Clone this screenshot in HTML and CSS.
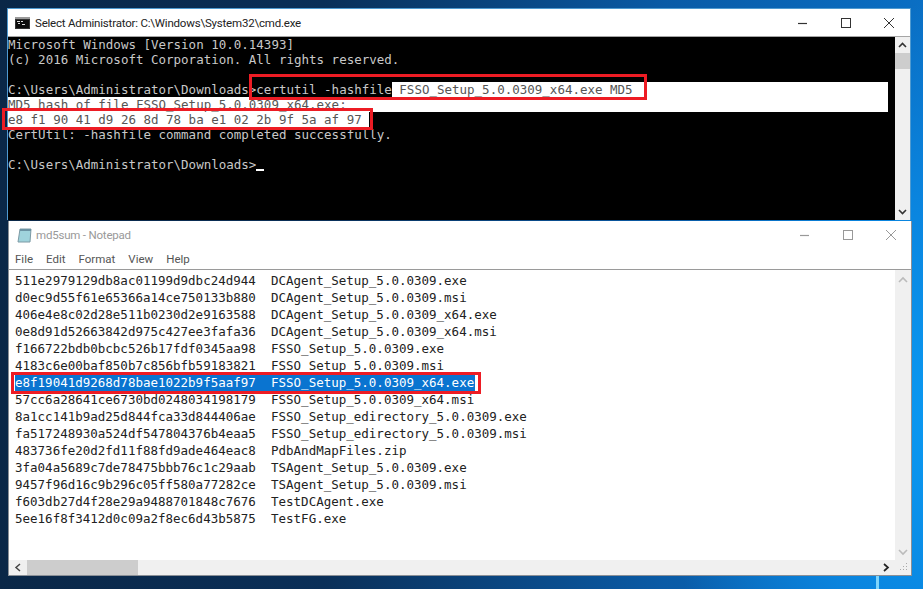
FILE: index.html
```html
<!DOCTYPE html>
<html lang="en">
<head>
<meta charset="utf-8">
<title>md5sum</title>
<link rel="stylesheet" href="styles.css">
</head>
<body>
<div class="desktop">
  <span class="streak"></span>
  <section class="window cmd">
    <header class="titlebar cmd-title">
      <svg class="app-icon" width="15" height="12" viewBox="0 0 15 12"><rect width="15" height="12" fill="#333"/><rect x="0" y="0" width="15" height="2" fill="#9a9a9a"/><rect x="1" y="3" width="13" height="8" fill="#0c0c0c"/><path d="M2 4h3v1H2zM6 4h2v1H6zM3 6h2v1H3zM7 7h3v1H7z" fill="#ddd"/></svg>
      <span class="title">Select Administrator: C:\Windows\System32\cmd.exe</span>
      <div class="controls">
        <svg width="12" height="12" viewBox="0 0 12 12"><path d="M1 6.500h9" stroke="#333" stroke-width="1.2" fill="none"/></svg>
        <svg width="12" height="12" viewBox="0 0 12 12"><rect x="1.500" y="1.500" width="9" height="9" stroke="#333" fill="none"/></svg>
        <svg width="12" height="12" viewBox="0 0 12 12"><path d="M1 1l10 10M11 1L1 11" stroke="#333" fill="none"/></svg>
      </div>
    </header>
    <div class="cmd-body">
      <div class="console">
        <div class="line">Microsoft Windows [Version 10.0.14393]</div>
        <div class="line">(c) 2016 Microsoft Corporation. All rights reserved.</div>
        <div class="line"></div>
        <div class="line sel-row"><span>C:\Users\Administrator\Downloads&gt;certutil -hashfile</span><span class="sel sel-fill"> FSSO_Setup_5.0.0309_x64.exe MD5</span></div>
        <div class="line sel sel-full">MD5 hash of file FSSO_Setup_5.0.0309_x64.exe:</div>
        <div class="line sel sel-hash">e8 f1 90 41 d9 26 8d 78 ba e1 02 2b 9f 5a af 97</div>
        <div class="line">CertUtil: -hashfile command completed successfully.</div>
        <div class="line"></div>
        <div class="line">C:\Users\Administrator\Downloads&gt;<span class="cursor"></span></div>
      </div>
      <div class="vscroll cmd-scroll">
        <svg class="arrow" width="15" height="16" viewBox="0 0 15 16"><path d="M4 10l3.500-3.500L11 10" stroke="#333" stroke-width="1.6" fill="none"/></svg>
        <div class="thumb cmd-thumb"></div>
        <div class="spacer"></div>
        <svg class="arrow" width="15" height="16" viewBox="0 0 15 16"><path d="M4 6l3.500 3.500L11 6" stroke="#333" stroke-width="1.6" fill="none"/></svg>
      </div>
    </div>
  </section>

  <section class="window notepad">
    <header class="titlebar np-title">
      <svg class="app-icon" width="16" height="16" viewBox="0 0 16 16"><path d="M3 2h11l-1 13H1z" fill="#9fd3dc" stroke="#7d9aa5"/><path d="M3 2h11v2H3z" fill="#6b93a3"/></svg>
      <span class="title inactive">md5sum - Notepad</span>
      <div class="controls np-controls">
        <svg width="12" height="12" viewBox="0 0 12 12"><path d="M1 6.500h9" stroke="#999" stroke-width="1.2" fill="none"/></svg>
        <svg width="12" height="12" viewBox="0 0 12 12"><rect x="1.500" y="1.500" width="9" height="9" stroke="#999" fill="none"/></svg>
        <svg width="12" height="12" viewBox="0 0 12 12"><path d="M1 1l10 10M11 1L1 11" stroke="#999" fill="none"/></svg>
      </div>
    </header>
    <nav class="menu">
      <span>File</span><span>Edit</span><span>Format</span><span>View</span><span>Help</span>
    </nav>
    <div class="np-main">
      <div class="np-text">
        <div class="row"><span class="hash">511e2979129db8ac01199d9dbc24d944</span><span>DCAgent_Setup_5.0.0309.exe</span></div>
        <div class="row"><span class="hash">d0ec9d55f61e65366a14ce750133b880</span><span>DCAgent_Setup_5.0.0309.msi</span></div>
        <div class="row"><span class="hash">406e4e8c02d28e511b0230d2e9163588</span><span>DCAgent_Setup_5.0.0309_x64.exe</span></div>
        <div class="row"><span class="hash">0e8d91d52663842d975c427ee3fafa36</span><span>DCAgent_Setup_5.0.0309_x64.msi</span></div>
        <div class="row"><span class="hash">f166722bdb0bcbc526b17fdf0345aa98</span><span>FSSO_Setup_5.0.0309.exe</span></div>
        <div class="row"><span class="hash">4183c6e00baf850b7c856bfb59183821</span><span>FSSO_Setup_5.0.0309.msi</span></div>
        <div class="row selected"><span class="hash">e8f19041d9268d78bae1022b9f5aaf97</span><span>FSSO_Setup_5.0.0309_x64.exe</span></div>
        <div class="row"><span class="hash">57cc6a28641ce6730bd0248034198179</span><span>FSSO_Setup_5.0.0309_x64.msi</span></div>
        <div class="row"><span class="hash">8a1cc141b9ad25d844fca33d844406ae</span><span>FSSO_Setup_edirectory_5.0.0309.exe</span></div>
        <div class="row"><span class="hash">fa517248930a524df547804376b4eaa5</span><span>FSSO_Setup_edirectory_5.0.0309.msi</span></div>
        <div class="row"><span class="hash">483736fe20d2fd11f88fd9ade464eac8</span><span>PdbAndMapFiles.zip</span></div>
        <div class="row"><span class="hash">3fa04a5689c7de78475bbb76c1c29aab</span><span>TSAgent_Setup_5.0.0309.exe</span></div>
        <div class="row"><span class="hash">9457f96d16c9b296c05ff580a77282ce</span><span>TSAgent_Setup_5.0.0309.msi</span></div>
        <div class="row"><span class="hash">f603db27d4f28e29a9488701848c7676</span><span>TestDCAgent.exe</span></div>
        <div class="row"><span class="hash">5ee16f8f3412d0c09a2f8ec6d43b5875</span><span>TestFG.exe</span></div>
      </div>
      <div class="vscroll np-vscroll">
        <svg class="arrow" width="16" height="18" viewBox="0 0 16 18"><path d="M4 12l4-4 4 4" stroke="#bbb" stroke-width="1.6" fill="none"/></svg>
        <div class="spacer"></div>
        <svg class="arrow" width="16" height="18" viewBox="0 0 16 18"><path d="M4 8l4 4 4-4" stroke="#bbb" stroke-width="1.6" fill="none"/></svg>
      </div>
    </div>
    <div class="hscroll">
      <svg class="arrow" width="18" height="15" viewBox="0 0 18 15"><path d="M11 4L7 7.500l4 3.500" stroke="#444" stroke-width="1.5" fill="none"/></svg>
      <div class="hthumb"></div>
      <div class="spacer"></div>
      <svg class="arrow" width="18" height="15" viewBox="0 0 18 15"><path d="M7 4l4 3.500-4 3.500" stroke="#222" stroke-width="1.7" fill="none"/></svg>
      <svg class="grip" width="16" height="15" viewBox="0 0 16 15"><path d="M11 3h1v1h-1zM8 6h1v1H8zM11 6h1v1h-1zM5 9h1v1H5zM8 9h1v1H8zM11 9h1v1h-1z" fill="#aaa"/></svg>
    </div>
  </section>

  <div class="callout callout-cmd"></div>
  <div class="callout callout-hash"></div>
  <div class="callout callout-row"></div>
</div>
</body>
</html>
```

FILE: styles.css
```css
* { box-sizing: border-box; }
html, body { margin: 0; padding: 0; }
body { overflow: hidden; }

.desktop {
  position: relative;
  width: 923px;
  height: 589px;
  overflow: hidden;
  background:
    radial-gradient(ellipse 300px 420px at 960px 420px, #0a9cf5 0%, #0a84de 55%, rgba(10,100,180,0) 100%),
    linear-gradient(90deg, #0a2747 0%, #0a2f58 35%, #0a5ba6 72%, #0a6fc4 100%);
}

.streak {
  position: absolute;
  left: 876px;
  top: 570px;
  width: 3px;
  height: 19px;
  background: #7fd4fb;
}

.window {
  position: absolute;
  display: flex;
  flex-direction: column;
  background: #fff;
}

.cmd {
  left: 7px;
  top: 8px;
  width: 904px;
  height: 212px;
  border: 1px solid #4f9ad0;
  border-bottom: 0;
}

.notepad {
  left: 8px;
  top: 221px;
  width: 904px;
  height: 355px;
  border: 1px solid #8a8f96;
  border-top: 0;
}

.titlebar {
  display: flex;
  align-items: center;
  flex: none;
}

.cmd-title {
  height: 28px;
  padding-left: 7px;
  border-bottom: 1px solid #a5a5a5;
}

.np-title {
  height: 27px;
  padding-left: 8px;
}

.app-icon { flex: none; }

.title {
  margin-left: 5px;
  font: 11.5px/16px Roboto, sans-serif;
  letter-spacing: -0.2px;
  color: #222;
  white-space: nowrap;
}

.title.inactive { color: #999; margin-left: 3px; }

.controls {
  margin-left: auto;
  display: flex;
  gap: 31px;
  padding-right: 15px;
}

.np-controls { padding-right: 14px; }

.cmd-body {
  flex: 1;
  display: flex;
  min-height: 0;
}

.console {
  flex: 1;
  background: #000;
  color: #c8c8c8;
  font: 12.5px/15px "DejaVu Sans Mono", monospace;
}

.line { height: 15px; white-space: pre; }

.sel-row { display: flex; width: 880px; }
.sel { background: #fff; color: #555; }
.sel-fill { flex: 1; }
.sel-full { width: 880px; }
.sel-hash { width: 361px; }

.cursor {
  display: inline-block;
  width: 8px;
  height: 2px;
  background: #fff;
  vertical-align: -2px;
}

.vscroll {
  flex: none;
  display: flex;
  flex-direction: column;
  background: #f0f0f0;
}

.cmd-scroll { width: 15px; }
.cmd-thumb { height: 16px; background: #cdcdcd; }
.spacer { flex: 1; }
.arrow { flex: none; display: block; }

.menu {
  flex: none;
  display: flex;
  gap: 13px;
  height: 22px;
  padding: 3px 0 0 6px;
  border-bottom: 1px solid #9a9a9a;
  font: 11.5px/16px Roboto, sans-serif;
  color: #555;
}

.np-main {
  flex: 1;
  display: flex;
  min-height: 0;
}

.np-text {
  flex: 1;
  padding: 2px 0 0 6px;
  background: #fff;
  color: #222;
  font: 12.5px/17px "DejaVu Sans Mono", monospace;
}

.row {
  display: flex;
  gap: 16px;
  height: 17px;
  white-space: pre;
}

.hash { width: 240px; }

.selected {
  width: 460px;
  background: #0a74d0;
  color: #fff;
}

.np-vscroll { width: 16px; }

.hscroll {
  flex: none;
  display: flex;
  height: 15px;
  background: #f0f0f0;
}

.hthumb { width: 111px; background: #cdcdcd; }
.grip { flex: none; }

.callout {
  position: absolute;
  border: 3px solid #ed1c24;
  pointer-events: none;
}

.callout-cmd { left: 249px; top: 74px; width: 398px; height: 26px; }
.callout-hash { left: 2px; top: 108px; width: 371px; height: 22px; }
.callout-row { left: 11px; top: 372px; width: 470px; height: 22px; }
```
